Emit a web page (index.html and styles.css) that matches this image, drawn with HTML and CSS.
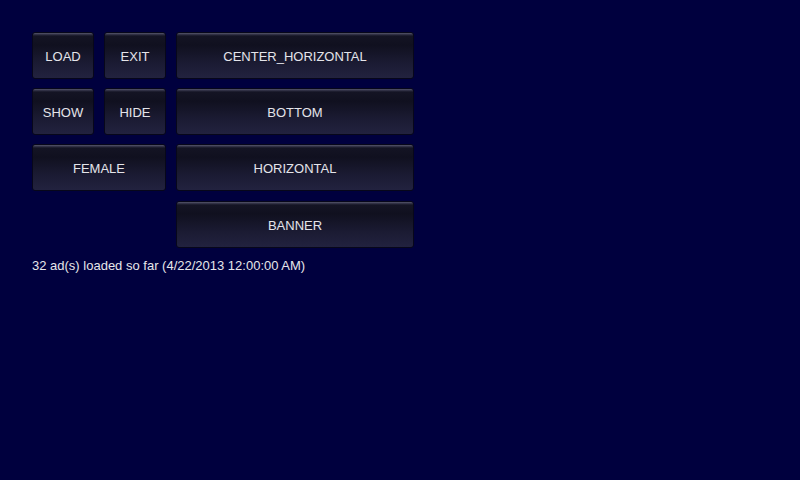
FILE: index.html
```html
<!DOCTYPE html>
<html>
<head>
<meta charset="utf-8">
<link rel="stylesheet" href="styles.css">
</head>
<body>
<div class="page">
  <div class="grid">
    <div class="btn b-load">LOAD</div>
    <div class="btn b-exit">EXIT</div>
    <div class="btn b-wide">CENTER_HORIZONTAL</div>
    <div class="btn">SHOW</div>
    <div class="btn">HIDE</div>
    <div class="btn b-wide">BOTTOM</div>
    <div class="btn b-span">FEMALE</div>
    <div class="btn b-wide">HORIZONTAL</div>
    <div class="btn b-wide b-last">BANNER</div>
  </div>
  <div class="status">32 ad(s) loaded so far (4/22/2013 12:00:00 AM)</div>
</div>
</body>
</html>
```
FILE: styles.css
```css
html, body {
  margin: 0;
  padding: 0;
  background: #00003e;
  width: 800px;
  height: 480px;
  overflow: hidden;
}
.page {
  padding: 32px 0 0 32px;
  font-family: "Liberation Sans", Arial, sans-serif;
  font-size: 13px;
  color: #e6e6ea;
}
.grid {
  display: grid;
  grid-template-columns: 62px 62px 238px;
  grid-template-rows: 47px 47px 47px 48px;
  column-gap: 10px;
  row-gap: 9px;
  width: 382px;
}
.btn {
  display: flex;
  align-items: center;
  justify-content: center;
  box-sizing: border-box;
  border: 1px solid #07071a;
  border-radius: 3px;
  background: linear-gradient(to bottom, #5a5a6e 0px, #3a3a50 1px, #141424 3px, #10101f 12px, #1b1b33 30px, #22223f 100%);
  color: #e4e4ea;
  font-size: 13px;
  padding-top: 1px;
}
.b-wide {
  grid-column: 3;
}
.b-span {
  grid-column: 1 / span 2;
}
.b-last {
  margin-top: 1px;
}
.status {
  margin-top: 10px;
  line-height: 15px;
  color: #e6e6ea;
}
```
